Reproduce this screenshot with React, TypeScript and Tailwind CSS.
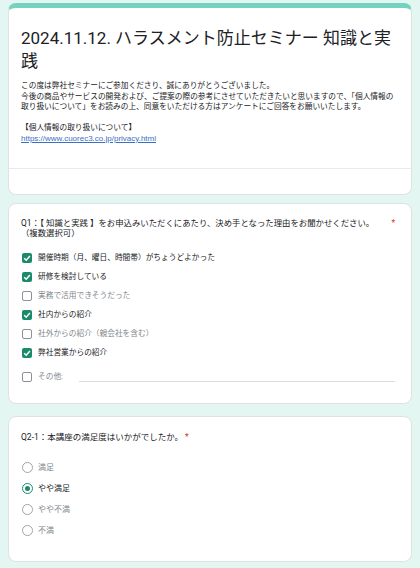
import { useState } from "react";

const options = [
  { label: "開催時期（月、曜日、時間帯）がちょうどよかった", checked: true },
  { label: "研修を検討している", checked: true },
  { label: "実務で活用できそうだった", checked: false },
  { label: "社内からの紹介", checked: true },
  { label: "社外からの紹介（親会社を含む）", checked: false },
  { label: "弊社営業からの紹介", checked: true },
];

const ratings = ["満足", "やや満足", "やや不満", "不満"];

function Checkbox({ checked }: { checked: boolean }) {
  if (checked) {
    return (
      <span className="flex size-[10px] shrink-0 items-center justify-center rounded-[2px] bg-[#1b8a6b]">
        <svg viewBox="0 0 10 10" className="size-[10px]">
          <path d="M2.2 5.2 L4.2 7.2 L7.9 3.1" fill="none" stroke="white" strokeWidth="1.5" />
        </svg>
      </span>
    );
  }
  return <span className="size-[10px] shrink-0 rounded-[2px] border-[1.5px] border-[#8d9094]" />;
}

function Radio({ checked }: { checked: boolean }) {
  return (
    <span
      className={`flex size-[11px] shrink-0 items-center justify-center rounded-full border-[1.5px] ${
        checked ? "border-[#1b8a6b]" : "border-[#a0a4a8]"
      }`}
    >
      {checked && <span className="size-[5px] rounded-full bg-[#1b8a6b]" />}
    </span>
  );
}

export default function App() {
  const [picked, setPicked] = useState("やや満足");

  return (
    <div className="min-h-[568px] bg-[#e3f6f2] px-2 pt-[3px] pb-2 font-['Roboto','Noto_Sans_CJK_JP',sans-serif] text-[#202124]">
      {/* header card */}
      <div className="rounded-lg border border-[#dde3e1] border-t-[5px] border-t-[#74d3bf] bg-white">
        <div className="px-3 pt-[19px] pb-[24px]">
          <h1 className="text-[17px] leading-[23px]">
            <span className="whitespace-nowrap">2024.11.12. ハラスメント防止セミナー 知識と実</span>
            <br />
            践
          </h1>
          <div className="mt-2 text-[7.7px] leading-[10.5px]">
            <p className="whitespace-nowrap">この度は弊社セミナーにご参加くださり、誠にありがとうございました。</p>
            <p className="whitespace-nowrap">今後の商品やサービスの開発および、ご提案の際の参考にさせていただきたいと思いますので、「個人情報の</p>
            <p className="whitespace-nowrap">取り扱いについて」をお読みの上、同意をいただける方はアンケートにご回答をお願いいたします。</p>
            <p className="h-[10.5px]" />
            <p className="whitespace-nowrap">【個人情報の取り扱いについて】</p>
            <a href="#" className="font-['Liberation_Sans',sans-serif] text-[8px] text-[#3b6fc4] underline">
              https://www.cuorec3.co.jp/privacy.html
            </a>
          </div>
        </div>
        <div className="h-[26px] border-t border-[#e8eaed]" />
      </div>

      {/* Q1 */}
      <div className="mt-2 rounded-lg border border-[#dde3e1] bg-white px-3 pt-[14px] pb-[17px]">
        <div className="flex items-start justify-between text-[8.4px] leading-[10px]">
          <p>
            Q1：【 知識と実践 】をお申込みいただくにあたり、決め手となった理由をお聞かせください。
            <br />
            （複数選択可）
          </p>
          <span className="mr-[4px] text-[#d93025]">*</span>
        </div>
        <div className="mt-[10px] flex flex-col">
          {options.map((o) => (
            <label key={o.label} className="flex h-[19px] items-center gap-[6px] pl-[1px]">
              <Checkbox checked={o.checked} />
              <span className={`text-[7.7px] ${o.checked ? "text-[#202124]" : "text-[#80868b]"}`}>{o.label}</span>
            </label>
          ))}
          <div className="mt-[5px] flex h-[19px] items-center pl-[1px]">
            <Checkbox checked={false} />
            <span className="ml-[6px] text-[7.7px] text-[#80868b]">その他:</span>
            <span className="mt-[10px] ml-[16px] mr-[4px] flex-1 border-b border-[#dadce0]" />
          </div>
        </div>
      </div>

      {/* Q2-1 */}
      <div className="mt-3 rounded-lg border border-[#dde3e1] bg-white px-3 pt-[15px] pb-[20px]">
        <p className="text-[8.5px] leading-[10px]">
          Q2-1：本講座の満足度はいかがでしたか。<span className="ml-[2px] text-[#d93025]">*</span>
        </p>
        <div className="mt-[15px] flex flex-col">
          {ratings.map((r) => (
            <label
              key={r}
              onClick={() => setPicked(r)}
              className="flex h-[21px] items-center gap-[5px] pl-[1px]"
            >
              <Radio checked={picked === r} />
              <span className={`text-[8px] ${picked === r ? "text-[#202124]" : "text-[#80868b]"}`}>{r}</span>
            </label>
          ))}
        </div>
      </div>
    </div>
  );
}
